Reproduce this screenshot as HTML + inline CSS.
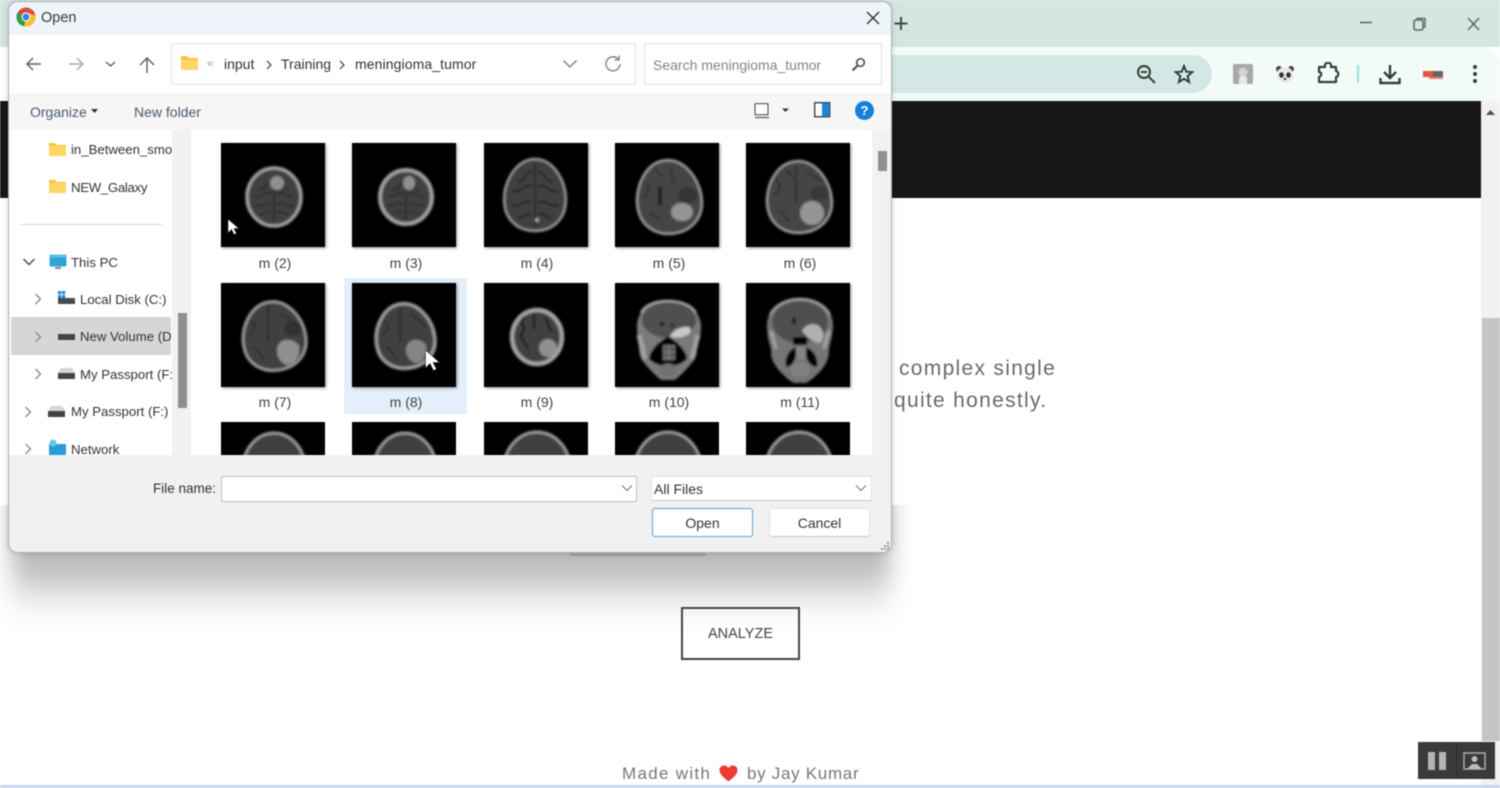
<!DOCTYPE html>
<html><head><meta charset="utf-8"><title>Open</title>
<style>
html,body{margin:0;padding:0;width:1500px;height:788px;overflow:hidden;background:#fff}
body{position:relative;font-family:"Liberation Sans",sans-serif;filter:blur(.4px)}
div,span,svg{position:absolute;display:block}
.t{white-space:nowrap;color:#333;font-size:14px;line-height:18px}
.l{white-space:nowrap;color:#444;font-size:14px;line-height:18px;width:104px;text-align:center}
.n{white-space:nowrap;color:#333;font-size:13.2px;line-height:18px}
.th{width:104px;height:104px;background:#000;box-shadow:1px 1px 3px rgba(0,0,0,.45)}
.th svg{left:0;top:0}
.cut{height:33px;overflow:hidden;width:104px;background:#000}
.p{white-space:nowrap;color:#666b70;font-size:21px;line-height:26px;letter-spacing:1.3px}
</style></head><body>
<svg width="0" height="0" style="left:0;top:0"><defs>
<filter id="b" x="-10%" y="-10%" width="120%" height="120%"><feGaussianBlur stdDeviation="1"/></filter>
<filter id="sh" filterUnits="userSpaceOnUse" x="-100" y="-200" width="1300" height="600"><feGaussianBlur stdDeviation="12 22"/></filter>
<path id="egg" vector-effect="non-scaling-stroke" d="M0-30C18-30 30-12 30 4C30 21 16 30 0 30C-16 30-30 21-30 4C-30-12-18-30 0-30Z"/>
<g id="s" fill="none" stroke="#1a1a1a" stroke-width="1.400">
<path d="M0-26V26"/>
<path d="M-3-19C-11-17-9-11-18-11M-3-7C-12-9-13-2-23-3M-4 6C-10 3-14 10-23 8M-4 16C-8 12-12 20-17 18"/>
<path d="M3-19C11-17 9-11 18-11M3-7C12-9 13-2 23-3M4 6C10 3 14 10 23 8M4 16C8 12 12 20 17 18"/>
</g>
</defs></svg>

<!-- chrome behind -->
<div style="left:0;top:0;width:1500px;height:47px;background:#d5e5e0"></div>
<div style="left:880px;top:47px;width:620px;height:54px;background:#f3fbf8;border-radius:0 18px 0 0"></div>
<div style="left:880px;top:55px;width:332px;height:38px;background:#d3e8e4;border-radius:0 19px 19px 0"></div>
<div style="left:0;top:101px;width:1481px;height:97px;background:#181818"></div>
<div style="left:1481px;top:101px;width:19px;height:684px;background:#f1f1f1"></div>
<div style="left:1482px;top:318px;width:18px;height:423px;background:#c4c4c4"></div>
<div style="left:0;top:785px;width:1500px;height:3px;background:#c9d5e6"></div>
<svg style="left:1484px;top:108px" width="13" height="8"><path d="M2 7L6.500 2L11 7Z" fill="#505050"/></svg>
<svg style="left:893px;top:14px" width="16" height="18"><path d="M8 3V16M1.500 9.500H14.500" stroke="#3d4a47" stroke-width="2"/></svg>
<svg style="left:1355px;top:12px" width="130" height="24" fill="none" stroke="#5e6b68"><path d="M5 10.500H17" stroke-width="1.600"/><rect x="59" y="8" width="9" height="10" rx="2" stroke-width="1.600"/><path d="M62 8V6.500H70V15H68" stroke-width="1.400"/><path d="M113 6L124 18M124 6L113 18" stroke-width="1.500"/></svg>
<svg style="left:1135px;top:63px" width="24" height="24" fill="none" stroke="#33403d" stroke-width="2"><circle cx="9" cy="9" r="6"/><path d="M6 9H12M14 14L20 20"/></svg>
<svg style="left:1174px;top:64px" width="20" height="20" fill="none" stroke="#33403d" stroke-width="2"><path d="M10 2L12.300 7.700L18.300 8.100L13.700 12L15.100 18L10 14.800L4.900 18L6.300 12L1.700 8.100L7.700 7.700Z"/></svg>
<div style="left:1233px;top:64px;width:20px;height:20px;background:#a9a9a9;border-radius:2px"></div>
<svg style="left:1233px;top:64px" width="20" height="20"><circle cx="10" cy="8" r="4.500" fill="#d2d2d2"/><path d="M6 20V14C6 11 14 11 14 14V20Z" fill="#e8e8e8"/></svg>
<svg style="left:1275px;top:64px" width="20" height="20"><circle cx="4" cy="5" r="3" fill="#444"/><circle cx="16" cy="5" r="3" fill="#444"/><ellipse cx="10" cy="11" rx="8.500" ry="8" fill="#e9e9e9"/><ellipse cx="6.500" cy="11" rx="2.300" ry="2.800" fill="#333"/><ellipse cx="13.500" cy="11" rx="2.300" ry="2.800" fill="#333"/><circle cx="10" cy="15" r="1.200" fill="#333"/></svg>
<svg style="left:1316px;top:62px" width="25" height="23" fill="none" stroke="#33403d" stroke-width="2.200"><path d="M3 5H9V3C9 0 15 0 15 3V5H20V9C23 9 23 15 20 15V20H3V15C6 14 6 10 3 10Z" stroke-linejoin="round"/></svg>
<div style="left:1357px;top:65px;width:2px;height:18px;background:#8fe3de"></div>
<svg style="left:1378px;top:63px" width="24" height="22" fill="none" stroke="#33403d" stroke-width="2.400"><path d="M12 2V14M6 9L12 15L18 9"/><path d="M2.500 15V20H21.500V15"/></svg>
<div style="left:1423px;top:71px;width:10px;height:6px;background:#e8523d"></div>
<div style="left:1433px;top:71px;width:10px;height:6px;background:#666"></div>
<div style="left:1429px;top:77px;width:14px;height:2px;background:#e8806d"></div>
<svg style="left:1470px;top:64px" width="10" height="20" fill="#33403d"><circle cx="5" cy="3" r="2"/><circle cx="5" cy="10" r="2"/><circle cx="5" cy="17" r="2"/></svg>

<!-- page -->
<div class="p" style="left:899px;top:356px">complex single</div>
<div class="p" style="left:894px;top:388px">quite honestly.</div>
<svg style="left:0;top:505px" width="1000" height="283"><rect x="12" y="-200" width="878" height="282" fill="#000" fill-opacity=".29" filter="url(#sh)"/></svg>
<div style="left:570px;top:552px;width:136px;height:4px;background:#a0a0a0"></div>
<div style="left:681px;top:607px;width:115px;height:49px;border:2px solid #444"></div>
<div class="t" style="left:681px;top:625px;width:119px;text-align:center;font-size:14.500px;color:#444">ANALYZE</div>
<div class="t" style="left:622px;top:764px;font-size:17px;line-height:20px;letter-spacing:1.300px;color:#777">Made with</div>
<svg style="left:719px;top:765px" width="19" height="17"><path d="M9.500 16.500C4 12 .5 9 .5 5C.5 2 3 .5 5 .5C7 .5 8.500 1.500 9.500 3C10.500 1.500 12 .5 14 .5C16 .5 18.500 2 18.500 5C18.500 9 15 12 9.500 16.500Z" fill="#ef3b32"/></svg>
<div class="t" style="left:747px;top:764px;font-size:17px;line-height:20px;letter-spacing:.7px;color:#777">by Jay Kumar</div>
<div style="left:1418px;top:742px;width:77px;height:37px;background:#3a3a3a"></div>
<div style="left:1456px;top:742px;width:1px;height:37px;background:#2a2a2a"></div>
<div style="left:1428px;top:752px;width:7px;height:18px;background:#b4b4b4"></div>
<div style="left:1439px;top:752px;width:7px;height:18px;background:#b4b4b4"></div>
<svg style="left:1463px;top:752px" width="24" height="19"><rect x="1" y="1" width="21" height="16" fill="none" stroke="#aaa" stroke-width="1.500"/><circle cx="11.500" cy="7" r="3" fill="#bbb"/><path d="M4 17L9 12H14L19 17Z" fill="#bbb"/></svg>

<!-- dialog -->
<div style="left:9px;top:2px;width:882px;height:550px;border-radius:9px;background:#f2f2f2;box-shadow:0 0 0 1px #a9b0b0,0 0 8px rgba(0,0,0,.2);overflow:hidden;z-index:5">
 <div style="left:0;top:0;width:882px;height:33px;background:#eef4f9"></div>
 <div style="left:0;top:33px;width:882px;height:58px;background:#fff"></div>
 <div style="left:0;top:91px;width:882px;height:37px;background:#f6f6f6"></div>
 <div style="left:0;top:128px;width:163px;height:325px;background:#fff"></div>
 <div style="left:163px;top:128px;width:19px;height:325px;background:#f1f1f1"></div>
 <div style="left:182px;top:128px;width:681px;height:325px;background:#fff"></div>
 <div style="left:863px;top:128px;width:19px;height:325px;background:#f1f1f1"></div>
 <div style="left:0;top:453px;width:882px;height:97px;background:#f1f1f1"></div>
 <div style="left:169px;top:311px;width:9px;height:95px;background:#8f8f8f"></div>
 <div style="left:869px;top:149px;width:9px;height:20px;background:#8f8f8f"></div>
 <div style="left:2px;top:315px;width:160px;height:38px;background:#d6d6d6"></div>
 <div style="left:12px;top:222px;width:141px;height:1px;background:#d8d8d8"></div>
</div>

<!-- dialog content, page coordinates -->
<div style="left:0;top:0;width:1500px;height:788px;z-index:6">
<svg style="left:16px;top:7px" width="20" height="20" viewBox="0 0 20 20"><circle cx="10" cy="10" r="9.500" fill="#dd4b3e"/><path d="M10 10L1.800 5.200A9.500 9.500 0 0 0 8 19.300Z" fill="#2d9e4f"/><path d="M10 10L8 19.300A9.500 9.500 0 0 0 19.300 8.500L10 5.500Z" fill="#f7c12e"/><circle cx="10" cy="10" r="4.500" fill="#fff"/><circle cx="10" cy="10" r="3.400" fill="#3d7fe0"/></svg>
<div class="t" style="left:41px;top:9px;font-size:14.500px;color:#3a3a3a">Open</div>
<svg style="left:865px;top:10px" width="16" height="16"><path d="M2 2L14 14M14 2L2 14" stroke="#333" stroke-width="1.400"/></svg>

<svg style="left:25px;top:55px" width="135" height="20" fill="none" stroke-width="1.400"><path d="M2 9H16M8 3L2 9L8 15" stroke="#5c5c5c"/><path d="M44 9H58M52 3L58 9L52 15" stroke="#a9a9a9"/><path d="M81 7L85.500 11L90 7" stroke="#5c5c5c"/><path d="M122 18V3M115 10L122 3L129 10" stroke="#5c5c5c"/></svg>
<div style="left:171px;top:43px;width:463px;height:40px;background:#fff;border:1px solid #e3e3e3"></div>
<svg style="left:181px;top:55px" width="18" height="16"><path d="M0 1H6L8 3H17V15H0Z" fill="#f9c23c"/><path d="M0 5H17V15H0Z" fill="#fed766"/></svg>
<div class="t" style="left:207px;top:55px;font-size:11px;color:#999">«</div>
<div class="t" style="left:224px;top:55px">input</div>
<svg style="left:265px;top:60px" width="8" height="10"><path d="M2 1L6 5L2 9" fill="none" stroke="#555" stroke-width="1.300"/></svg>
<div class="t" style="left:281px;top:55px">Training</div>
<svg style="left:338px;top:60px" width="8" height="10"><path d="M2 1L6 5L2 9" fill="none" stroke="#555" stroke-width="1.300"/></svg>
<div class="t" style="left:355px;top:55px;letter-spacing:.1px">meningioma_tumor</div>
<svg style="left:562px;top:59px" width="16" height="10"><path d="M1.500 1.500L8 8L14.500 1.500" fill="none" stroke="#777" stroke-width="1.300"/></svg>
<svg style="left:604px;top:55px" width="18" height="18" fill="none" stroke="#7a7a7a" stroke-width="1.300"><path d="M14.500 4.500A7 7 0 1 0 16 9"/><path d="M15 .5V5H10.500"/></svg>
<div style="left:644px;top:43px;width:236px;height:40px;background:#fff;border:1px solid #e3e3e3"></div>
<div class="t" style="left:653px;top:56px;color:#858585">Search meningioma_tumor</div>
<svg style="left:851px;top:57px" width="15" height="15" fill="none" stroke="#555" stroke-width="1.700"><circle cx="9.500" cy="5.500" r="3.800"/><path d="M6.500 8.500L1.500 13.500" stroke-width="2.200"/></svg>

<div class="t" style="left:30px;top:103px;color:#4a5a70">Organize</div>
<svg style="left:90px;top:108px" width="9" height="6"><path d="M1 1H8L4.500 5Z" fill="#333"/></svg>
<div class="t" style="left:134px;top:103px;color:#4a5a70">New folder</div>
<svg style="left:754px;top:103px" width="36" height="16"><rect x="1" y=".7" width="13" height="11" fill="#fff" stroke="#444"/><path d="M1 14.500H15" stroke="#777" stroke-width="1.500"/><path d="M28 5.500H35L31.500 9Z" fill="#263a5e"/></svg>
<svg style="left:814px;top:102px" width="17" height="16"><rect x=".7" y=".7" width="15" height="14" fill="#fff" stroke="#333" stroke-width="1.300"/><rect x="8" y="1" width="7.500" height="13.500" fill="#1a86d8"/></svg>
<div style="left:855px;top:101px;width:19px;height:19px;border-radius:50%;background:#1281dc"></div>
<div class="t" style="left:855px;top:102px;width:19px;text-align:center;color:#fff;font-weight:bold;font-size:13px">?</div>

<!-- nav -->
<div style="left:9px;top:130px;width:163px;height:325px;overflow:hidden">
<svg style="left:40px;top:12px" width="18" height="15"><path d="M0 1H6L8 3H17V14H0Z" fill="#f9c23c"/><path d="M0 4H17V14H0Z" fill="#fed766"/></svg>
<div class="n" style="left:62px;top:11px">in_Between_smoke</div>
<svg style="left:40px;top:49px" width="18" height="15"><path d="M0 1H6L8 3H17V14H0Z" fill="#f9c23c"/><path d="M0 4H17V14H0Z" fill="#fed766"/></svg>
<div class="n" style="left:62px;top:49px;letter-spacing:-.3px">NEW_Galaxy</div>
<svg style="left:13px;top:127px" width="14" height="10"><path d="M1.500 2L7 7.500L12.500 2" fill="none" stroke="#444" stroke-width="1.400"/></svg>
<svg style="left:40px;top:124px" width="19" height="17"><rect x=".5" y=".5" width="17" height="12" rx="1.500" fill="#2fa4da"/><rect x=".5" y=".5" width="17" height="3" fill="#5ac0ea"/><rect x="6" y="13" width="6" height="2" fill="#888"/></svg>
<div class="n" style="left:62px;top:124px">This PC</div>
<svg style="left:25px;top:163px" width="8" height="12"><path d="M1.500 1L6.500 6L1.500 11" fill="none" stroke="#888" stroke-width="1.300"/></svg>
<svg style="left:49px;top:161px" width="18" height="14"><rect x="0" y="0" width="3.200" height="3.200" fill="#1c88d8"/><rect x="4" y="0" width="3.200" height="3.200" fill="#1c88d8"/><rect x="0" y="4" width="3.200" height="3.200" fill="#1c88d8"/><rect x="4" y="4" width="3.200" height="3.200" fill="#1c88d8"/><rect x="0" y="7" width="17" height="6" fill="#4a4a4a"/></svg>
<div class="n" style="left:71px;top:161px">Local Disk (C:)</div>
<svg style="left:25px;top:201px" width="8" height="12"><path d="M1.500 1L6.500 6L1.500 11" fill="none" stroke="#888" stroke-width="1.300"/></svg>
<svg style="left:49px;top:203px" width="18" height="8"><rect x="0" y="1" width="17" height="6" fill="#444"/></svg>
<div class="n" style="left:71px;top:198px">New Volume (D:)</div>
<svg style="left:25px;top:238px" width="8" height="12"><path d="M1.500 1L6.500 6L1.500 11" fill="none" stroke="#888" stroke-width="1.300"/></svg>
<svg style="left:49px;top:238px" width="18" height="12"><path d="M3 0H14L17 5H0Z" fill="#d5d5d5"/><rect x="0" y="5" width="17" height="6" fill="#444"/></svg>
<div class="n" style="left:71px;top:236px">My Passport (F:)</div>
<svg style="left:15px;top:276px" width="8" height="12"><path d="M1.500 1L6.500 6L1.500 11" fill="none" stroke="#888" stroke-width="1.300"/></svg>
<svg style="left:39px;top:276px" width="18" height="12"><path d="M3 0H14L17 5H0Z" fill="#d5d5d5"/><rect x="0" y="5" width="17" height="6" fill="#444"/></svg>
<div class="n" style="left:62px;top:273px">My Passport (F:)</div>
<svg style="left:15px;top:313px" width="8" height="12"><path d="M1.500 1L6.500 6L1.500 11" fill="none" stroke="#888" stroke-width="1.300"/></svg>
<svg style="left:39px;top:309px" width="19" height="17"><rect x="1" y="5" width="17" height="11" rx="1" fill="#2a9bd8"/><circle cx="5" cy="4" r="3.500" fill="#6ec3ea"/></svg>
<div class="n" style="left:62px;top:311px">Network</div>
</div>

<!-- files -->
<div style="left:344px;top:278px;width:123px;height:136px;background:#e3f0fb"></div>

<div class="th" style="left:221px;top:143px"><svg width="104" height="104"><g filter="url(#b)"><ellipse cx="53" cy="54" rx="27" ry="29" fill="#3f3f3f" stroke="#a0a0a0" stroke-width="3.500"/><use href="#s" transform="translate(53 56) scale(.85)"/><ellipse cx="56" cy="40" rx="7" ry="7" fill="#8f8f8f"/></g></svg></div>
<div class="th" style="left:352px;top:143px"><svg width="104" height="104"><g filter="url(#b)"><ellipse cx="54" cy="54" rx="26" ry="27" fill="#3f3f3f" stroke="#a0a0a0" stroke-width="4"/><use href="#s" transform="translate(54 56) scale(.8)"/><ellipse cx="57" cy="40" rx="6" ry="7" fill="#8f8f8f"/></g></svg></div>
<div class="th" style="left:484px;top:143px"><svg width="104" height="104"><g filter="url(#b)"><use href="#egg" transform="translate(51 52) scale(1.030 1.200)" fill="#404040" stroke="#979797" stroke-width="2.500"/><use href="#s" transform="translate(51 52) scale(1 1.250)"/><circle cx="53" cy="77" r="2" fill="#aaa"/></g></svg></div>
<div class="th" style="left:615px;top:143px"><svg width="104" height="104"><g filter="url(#b)"><use href="#egg" transform="translate(54 54) rotate(-6) scale(1.080 1.230)" fill="#454545" stroke="#9b9b9b" stroke-width="2.500"/><path d="M45 44V62" stroke="#0c0c0c" stroke-width="3"/><ellipse cx="73" cy="52" rx="10" ry="8" fill="#353535"/><path d="M30 40C36 44 34 50 28 54M34 70C38 72 42 76 46 76M40 26C42 30 46 30 48 34M55 24C58 30 56 36 60 40" stroke="#262626" stroke-width="1.300" fill="none"/><ellipse cx="67" cy="69" rx="11" ry="9" fill="#959595"/></g></svg></div>
<div class="th" style="left:746px;top:143px"><svg width="104" height="104"><g filter="url(#b)"><use href="#egg" transform="translate(53 54) rotate(-6) scale(1.080 1.200)" fill="#454545" stroke="#9b9b9b" stroke-width="2.500"/><path d="M50 22V60" stroke="#222" stroke-width="1.300"/><ellipse cx="74" cy="50" rx="9" ry="7" fill="#373737"/><path d="M30 36C36 42 34 48 28 52M32 68C38 68 38 76 44 78M40 26C42 32 46 30 47 36M60 28C66 32 70 34 76 38" stroke="#262626" stroke-width="1.300" fill="none"/><ellipse cx="66" cy="70" rx="12" ry="12" fill="#959595"/></g></svg></div>

<div class="th" style="left:221px;top:283px"><svg width="104" height="103"><g filter="url(#b)"><use href="#egg" transform="translate(53 53) rotate(-8) scale(1.050 1.150)" fill="#404040" stroke="#979797" stroke-width="3"/><path d="M47 22V58" stroke="#262626" stroke-width="1.500"/><ellipse cx="72" cy="46" rx="9" ry="7" fill="#323232"/><path d="M30 38C36 42 34 48 28 52M32 64C38 66 38 74 44 76M58 30C66 36 70 38 78 44" stroke="#232323" stroke-width="1.300" fill="none"/><path d="M57 62C62 54 72 56 78 62C80 72 74 82 66 82C58 80 54 70 57 62Z" fill="#8f8f8f"/></g></svg></div>
<div class="th" style="left:352px;top:283px"><svg width="104" height="103"><g filter="url(#b)"><use href="#egg" transform="translate(53 53) rotate(-8) scale(.980 1.080)" fill="#404040" stroke="#9b9b9b" stroke-width="3.500"/><path d="M48 24V58" stroke="#262626" stroke-width="1.500"/><path d="M32 38C38 42 36 48 30 52M34 64C40 66 40 74 46 76M58 30C64 36 68 38 74 44" stroke="#232323" stroke-width="1.300" fill="none"/><path d="M55 62C60 54 70 56 74 62C76 72 70 80 64 80C56 78 52 70 55 62Z" fill="#858585"/></g></svg></div>
<div class="th" style="left:484px;top:283px"><svg width="104" height="103"><g filter="url(#b)"><ellipse cx="53" cy="54" rx="25" ry="27" fill="#3f3f3f" stroke="#a3a3a3" stroke-width="4.500"/><path d="M40 34C34 40 44 44 38 50C34 56 44 60 44 66M50 30V46M60 34C66 38 62 44 68 48" stroke="#141414" stroke-width="2" fill="none"/><ellipse cx="64" cy="65" rx="9" ry="9" fill="#909090"/></g></svg></div>

<!-- m(10) coronal -->
<div class="th" style="left:615px;top:283px"><svg width="104" height="103"><g filter="url(#b)">
<path d="M53 17C72 17 86 28 86 44C86 54 83 60 82 64C82 70 81 74 79 77C74 84 66 92 60 97H46C40 92 32 84 27 77C25 74 24 70 24 64C23 60 22 54 22 44C22 28 34 17 53 17Z" fill="#7a7a7a"/>
<ellipse cx="54" cy="37" rx="27" ry="18" fill="#505050"/>
<path d="M26 30C30 21 42 18 53 18C64 18 76 21 81 30" fill="none" stroke="#a5a5a5" stroke-width="2.500"/>
<path d="M24 52L30 76M83 52L77 76" stroke="#a0a0a0" stroke-width="5"/>
<path d="M53 54C45 57 34 68 34 76C40 82 47 83 53 83C59 83 66 82 72 76C72 68 61 57 53 54Z" fill="#040404"/>
<path d="M48 62H60V77H48Z" fill="#6f6f6f"/><circle cx="51" cy="66" r="1.300" fill="#161616"/><circle cx="57" cy="66" r="1.300" fill="#161616"/><circle cx="51" cy="72" r="1.300" fill="#161616"/><circle cx="57" cy="72" r="1.300" fill="#161616"/>
<ellipse cx="53" cy="87" rx="9" ry="6.500" fill="#717171"/>
<ellipse cx="47" cy="41" rx="3" ry="2" fill="#1b1b1b"/><ellipse cx="57" cy="42" rx="2" ry="2" fill="#2a2a2a"/>
<path d="M55 54C57 47 66 43 74 44C77 47 76 51 70 53C65 55 60 55 55 54Z" fill="#c8c8c8"/>
</g></svg></div>
<!-- m(11) coronal -->
<div class="th" style="left:746px;top:283px"><svg width="104" height="104"><g filter="url(#b)">
<path d="M54 15C73 15 87 27 87 42C87 52 84 60 83 66C83 72 82 76 80 80C76 88 66 97 60 100H48C42 97 32 88 28 80C25 76 25 72 25 66C23 60 21 52 21 42C21 27 35 15 54 15Z" fill="#757575"/>
<ellipse cx="54" cy="39" rx="28" ry="21" fill="#505050"/>
<path d="M24 32C29 21 42 16 54 16C66 16 79 21 84 32" fill="none" stroke="#a0a0a0" stroke-width="2.500"/>
<path d="M25 48L30 66M83 48L78 66" stroke="#a0a0a0" stroke-width="3.500"/>
<path d="M47 54H61V62H47Z" fill="#050505"/>
<path d="M50 64C44 66 38 74 40 84C46 84 48 78 50 74Z M60 64C66 66 73 74 71 84C65 84 62 78 60 74Z" fill="#060606"/>
<path d="M50 64H60V76H50Z" fill="#858585"/>
<ellipse cx="54" cy="87" rx="10" ry="8" fill="#808080"/>
<ellipse cx="48" cy="38" rx="2" ry="4" fill="#1e1e1e"/>
<path d="M56 48C58 42 68 39 73 43C78 48 79 56 74 60C69 60 62 56 56 48Z" fill="#b0b0b0"/>
</g></svg></div>

<div class="l" style="left:223px;top:254px">m (2)</div>
<div class="l" style="left:354px;top:254px">m (3)</div>
<div class="l" style="left:485px;top:254px">m (4)</div>
<div class="l" style="left:617px;top:254px">m (5)</div>
<div class="l" style="left:748px;top:254px">m (6)</div>
<div class="l" style="left:223px;top:393px">m (7)</div>
<div class="l" style="left:354px;top:393px">m (8)</div>
<div class="l" style="left:485px;top:393px">m (9)</div>
<div class="l" style="left:617px;top:393px">m (10)</div>
<div class="l" style="left:748px;top:393px">m (11)</div>

<div class="cut" style="left:221px;top:422px"><svg width="104" height="33"><g filter="url(#b)"><ellipse cx="53" cy="46" rx="31" ry="35" fill="#404040" stroke="#9b9b9b" stroke-width="3"/></g></svg></div>
<div class="cut" style="left:352px;top:422px"><svg width="104" height="33"><g filter="url(#b)"><ellipse cx="53" cy="46" rx="31" ry="35" fill="#404040" stroke="#9b9b9b" stroke-width="3"/></g></svg></div>
<div class="cut" style="left:484px;top:422px"><svg width="104" height="33"><g filter="url(#b)"><ellipse cx="53" cy="46" rx="33" ry="36" fill="#404040" stroke="#9b9b9b" stroke-width="3"/></g></svg></div>
<div class="cut" style="left:615px;top:422px"><svg width="104" height="33"><g filter="url(#b)"><ellipse cx="53" cy="46" rx="33" ry="36" fill="#404040" stroke="#9b9b9b" stroke-width="3"/></g></svg></div>
<div class="cut" style="left:746px;top:422px"><svg width="104" height="33"><g filter="url(#b)"><ellipse cx="53" cy="46" rx="33" ry="36" fill="#404040" stroke="#9b9b9b" stroke-width="3"/></g></svg></div>

<!-- cursors -->
<svg style="left:227px;top:218px" width="13" height="18"><path d="M1 1V15L4.500 11.500L7 16.500L9.500 15.500L7 10.500H12Z" fill="#fff" stroke="#222" stroke-width=".6"/></svg>
<svg style="left:424px;top:349px" width="17" height="23"><path d="M1.500 1V19L6 14.500L9.500 21.500L12.500 20L9 13.500H15.500Z" fill="#fff" stroke="#333" stroke-width=".6"/></svg>

<!-- bottom -->
<div class="t" style="left:153px;top:480px;font-size:13.500px;color:#333">File name:</div>
<div style="left:221px;top:476px;width:414px;height:24px;background:#fff;border:1px solid #b9c3c9;border-radius:2px"></div>
<svg style="left:621px;top:484px" width="12" height="9"><path d="M1 1.500L6 6.500L11 1.500" fill="none" stroke="#777" stroke-width="1.100"/></svg>
<div style="left:651px;top:476px;width:219px;height:23px;background:#fff;border:1px solid #e2e2e2;border-bottom-color:#c8c8c8"></div>
<div class="t" style="left:654px;top:480px;color:#333">All Files</div>
<svg style="left:855px;top:484px" width="12" height="9"><path d="M1 1.500L6 6.500L11 1.500" fill="none" stroke="#777" stroke-width="1.100"/></svg>
<div style="left:652px;top:508px;width:99px;height:27px;background:#fff;border:1px solid #5a9fd4;border-radius:3px"></div>
<div class="t" style="left:652px;top:514px;width:101px;text-align:center">Open</div>
<div style="left:769px;top:508px;width:99px;height:27px;background:#fff;border:1px solid #e2e2e2;border-bottom-color:#c5c5c5;border-radius:3px"></div>
<div class="t" style="left:769px;top:514px;width:101px;text-align:center">Cancel</div>
<svg style="left:879px;top:541px" width="11" height="10" fill="#9a9a9a"><rect x="8" y="1" width="2" height="2"/><rect x="5" y="4" width="2" height="2"/><rect x="8" y="4" width="2" height="2"/><rect x="2" y="7" width="2" height="2"/><rect x="5" y="7" width="2" height="2"/><rect x="8" y="7" width="2" height="2"/></svg>
</div>
</body></html>
